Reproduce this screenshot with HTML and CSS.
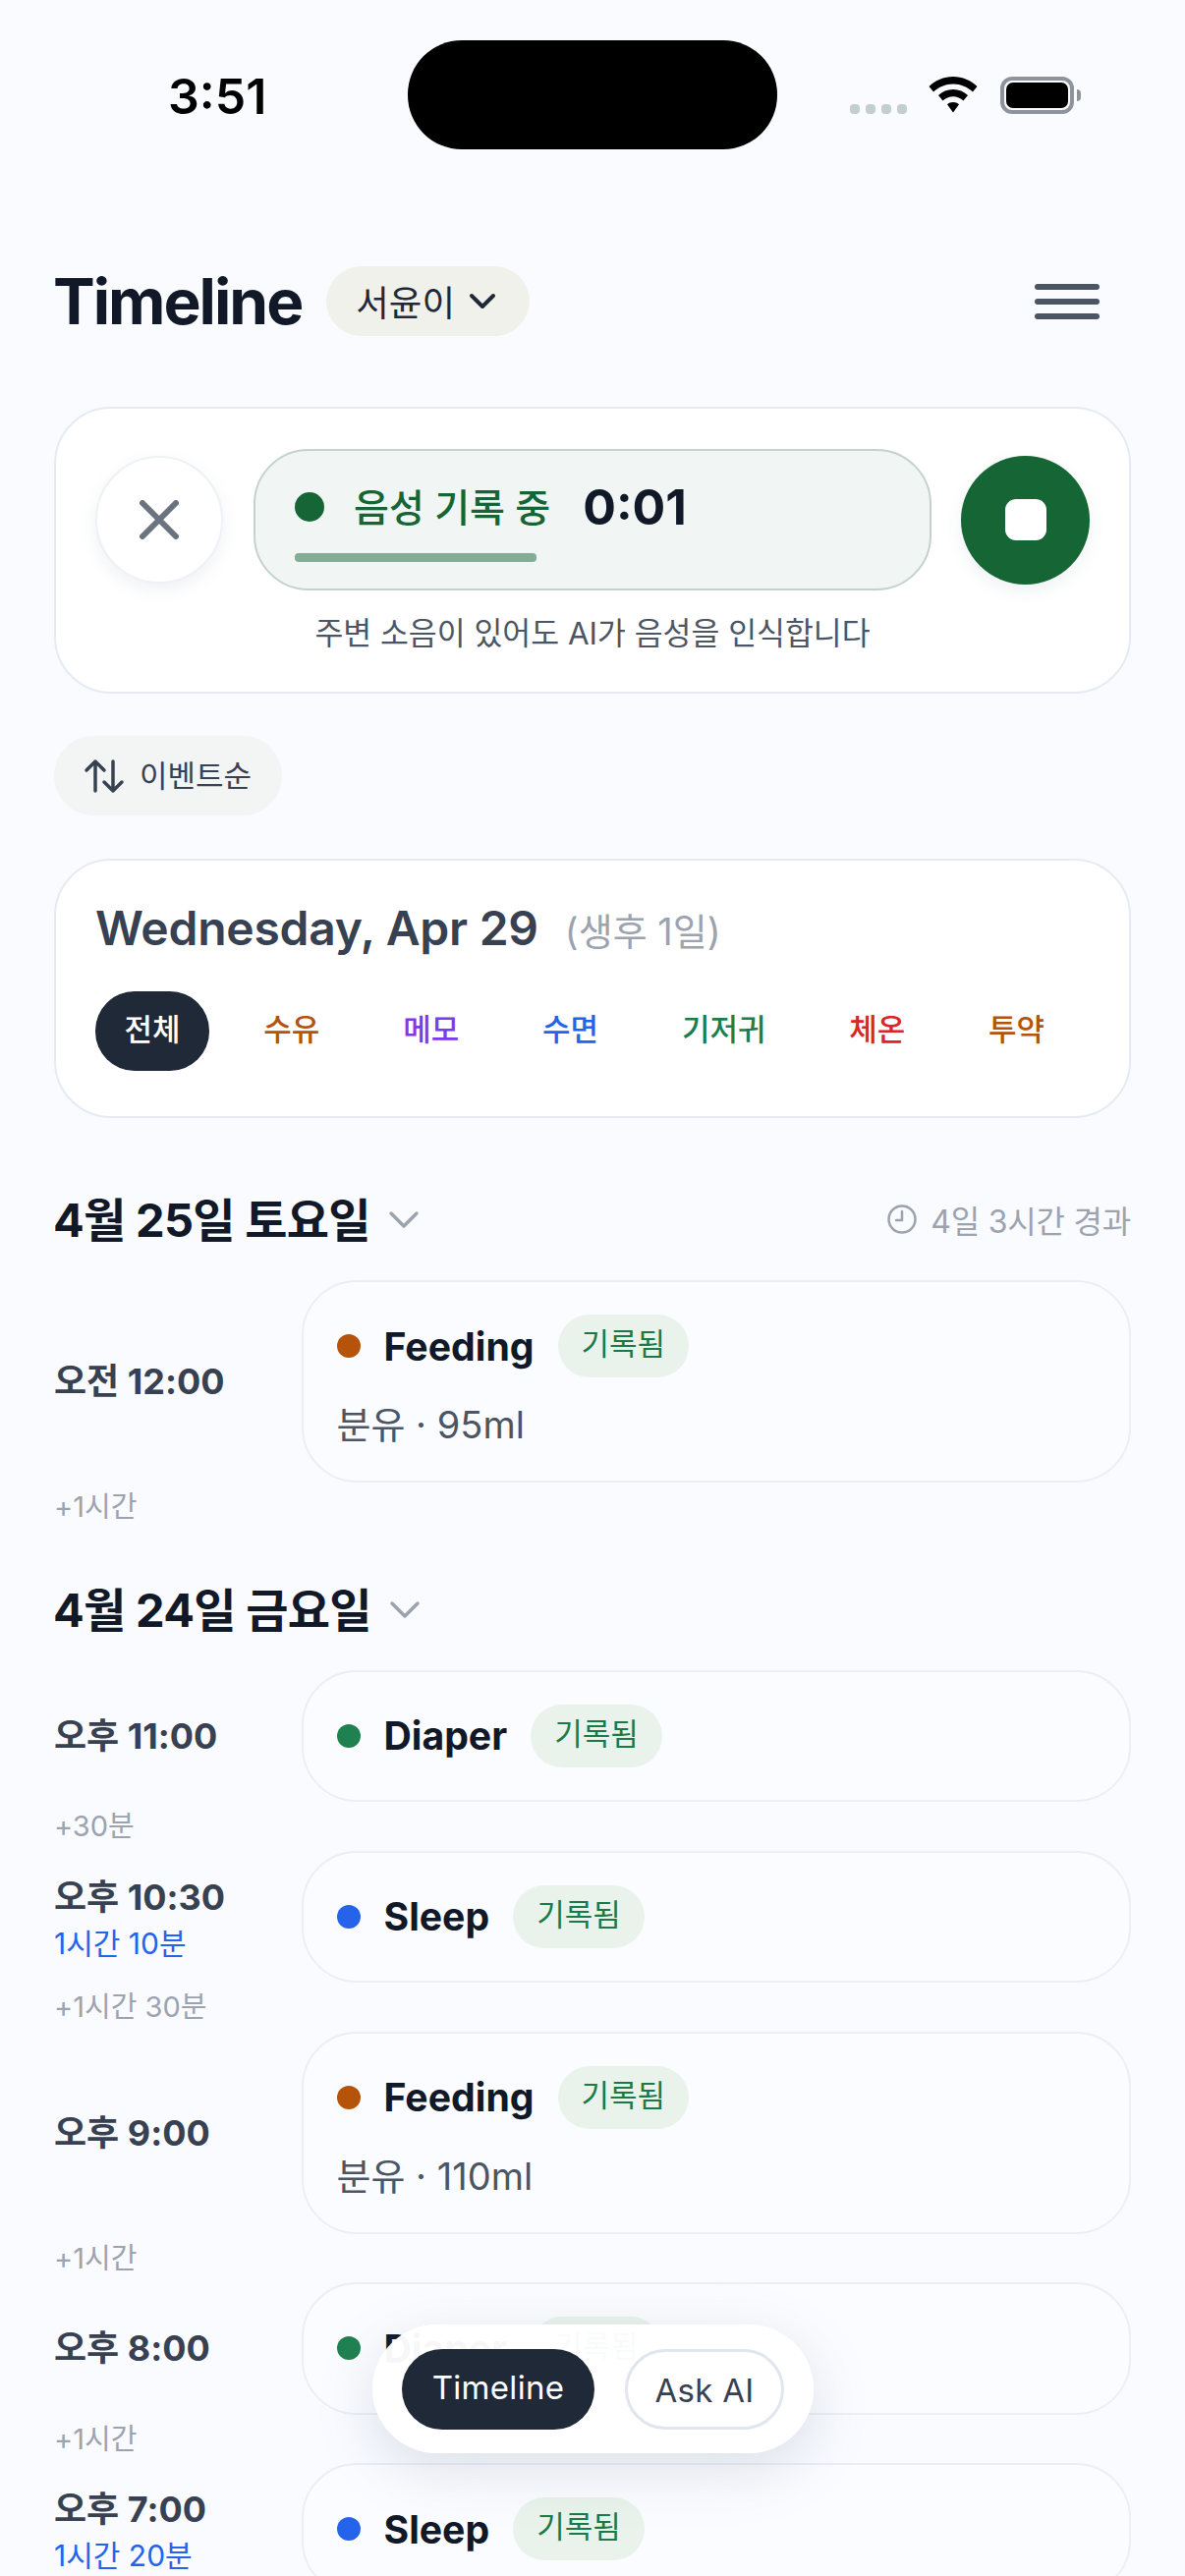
FILE: index.html
```html
<!DOCTYPE html>
<html lang="ko">
<head>
<meta charset="utf-8">
<title>Timeline</title>
<link rel="stylesheet" href="styles.css">
</head>
<body>
<div class="screen">
  <div class="status">
    <span class="clock">3:51</span>
    <span class="island"></span>
    <div class="status-icons">
      <span class="signal"><i></i><i></i><i></i><i></i></span>
      <svg class="wifi" width="50" height="38" viewBox="0 0 50 38"><path d="M25 0C15.500 0 7 3.700 0.500 10L5 15.500C10.300 10.500 17.300 7.400 25 7.400S39.700 10.500 45 15.500L49.500 10C43 3.700 34.500 0 25 0ZM25 13C19.200 13 14 15.200 10 19L14.500 24.500C17.300 21.900 21 20.300 25 20.300S32.700 21.900 35.500 24.500L40 19C36 15.200 30.800 13 25 13ZM25 26C22.400 26 20.800 26.800 19 28.300L25 36.500L31 28.300C29.200 26.800 27.600 26 25 26Z" fill="#000"/></svg>
      <span class="battery"><span class="battery-fill"></span></span><span class="battery-tip"></span>
    </div>
  </div>

  <header class="top">
    <h1 class="title">Timeline</h1>
    <button class="baby">서윤이
      <svg width="28" height="18" viewBox="0 0 28 18"><path d="M3 3L14 14L25 3" fill="none" stroke="#1f2937" stroke-width="4" stroke-linecap="round" stroke-linejoin="round"/></svg>
    </button>
    <span class="menu"><i></i><i></i><i></i></span>
  </header>

  <section class="card rec">
    <div class="rec-row">
      <button class="cancel">
        <svg width="40" height="40" viewBox="0 0 40 40"><path d="M3 3L37 37M37 3L3 37" stroke="#6b7280" stroke-width="6" stroke-linecap="round"/></svg>
      </button>
      <div class="rec-pill">
        <div class="rec-line"><span class="dot dot-rec"></span><span class="rec-label">음성 기록 중</span><span class="rec-time">0:01</span></div>
        <div class="rec-bar"></div>
      </div>
      <button class="stop"><span class="stop-mark"></span></button>
    </div>
    <p class="rec-hint">주변 소음이 있어도 AI가 음성을 인식합니다</p>
  </section>

  <button class="sort">
    <svg width="42" height="36" viewBox="0 0 42 36"><path d="M12 33V3M3 12L12 3L21 12M30 3V33M21 24L30 33L39 24" fill="none" stroke="#374151" stroke-width="3.500" stroke-linecap="round" stroke-linejoin="round"/></svg>
    <span class="sort-label">이벤트순</span>
  </button>

  <section class="card date-card">
    <div class="date-line"><span class="date">Wednesday, Apr 29</span><span class="age">(생후 1일)</span></div>
    <div class="chips">
      <span class="chip chip-on">전체</span>
      <span class="chip c-orange">수유</span>
      <span class="chip c-purple">메모</span>
      <span class="chip c-blue">수면</span>
      <span class="chip c-green">기저귀</span>
      <span class="chip c-red">체온</span>
      <span class="chip c-orange">투약</span>
      <span class="chip c-orange">이유식</span>
    </div>
  </section>

  <div class="day-head day-first">
    <h2 class="day">4월 25일 토요일</h2>
    <svg class="day-chev" width="32" height="20" viewBox="0 0 32 20"><path d="M3 3L16 16L29 3" fill="none" stroke="#9ca3af" stroke-width="3.500" stroke-linecap="round" stroke-linejoin="round"/></svg>
    <span class="elapsed">
      <svg width="32" height="32" viewBox="0 0 32 32"><circle cx="16" cy="16" r="13.500" fill="none" stroke="#9ca3af" stroke-width="2.500"/><path d="M16 8V17H10" fill="none" stroke="#9ca3af" stroke-width="2.500" stroke-linecap="round" stroke-linejoin="round"/></svg>
      4일 3시간 경과
    </span>
  </div>

  <div class="row">
    <div class="when"><span class="time">오전 12:00</span></div>
    <div class="event tall">
      <div class="ev-line"><span class="dot dot-orange"></span><span class="ev-name">Feeding</span><span class="badge">기록됨</span></div>
      <p class="ev-sub">분유 · 95ml</p>
    </div>
  </div>
  <p class="gap">+1시간</p>

  <div class="day-head day-second">
    <h2 class="day">4월 24일 금요일</h2>
    <svg class="day-chev" width="32" height="20" viewBox="0 0 32 20"><path d="M3 3L16 16L29 3" fill="none" stroke="#9ca3af" stroke-width="3.500" stroke-linecap="round" stroke-linejoin="round"/></svg>
  </div>

  <div class="row">
    <div class="when"><span class="time">오후 11:00</span></div>
    <div class="event"><div class="ev-line"><span class="dot dot-green"></span><span class="ev-name">Diaper</span><span class="badge">기록됨</span></div></div>
  </div>
  <p class="gap">+30분</p>
  <div class="row">
    <div class="when"><span class="time">오후 10:30</span><span class="span">1시간 10분</span></div>
    <div class="event"><div class="ev-line"><span class="dot dot-blue"></span><span class="ev-name">Sleep</span><span class="badge">기록됨</span></div></div>
  </div>
  <p class="gap">+1시간 30분</p>
  <div class="row">
    <div class="when"><span class="time">오후 9:00</span></div>
    <div class="event tall">
      <div class="ev-line"><span class="dot dot-orange"></span><span class="ev-name">Feeding</span><span class="badge">기록됨</span></div>
      <p class="ev-sub">분유 · 110ml</p>
    </div>
  </div>
  <p class="gap">+1시간</p>
  <div class="row">
    <div class="when"><span class="time">오후 8:00</span></div>
    <div class="event"><div class="ev-line"><span class="dot dot-green"></span><span class="ev-name">Diaper</span><span class="badge">기록됨</span></div></div>
  </div>
  <p class="gap">+1시간</p>
  <div class="row">
    <div class="when"><span class="time">오후 7:00</span><span class="span">1시간 20분</span></div>
    <div class="event"><div class="ev-line"><span class="dot dot-blue"></span><span class="ev-name">Sleep</span><span class="badge">기록됨</span></div></div>
  </div>

  <nav class="tabs">
    <span class="tab tab-on">Timeline</span>
    <span class="tab tab-off">Ask AI</span>
  </nav>
</div>
</body>
</html>
```
FILE: styles.css
```css
* { box-sizing: border-box; }
html, body { margin: 0; padding: 0; }
body { background: #f9fbff; font-family: Inter, "Noto Sans CJK KR", sans-serif; color: #111827; }
button { font: inherit; border: 0; padding: 0; }
h1, h2, p { margin: 0; font-weight: inherit; font-size: inherit; }
i { display: block; }

.screen { position: relative; width: 1206px; height: 2622px; overflow: hidden; padding: 41px 55px 0; }

.status { display: flex; align-items: flex-start; height: 111px; }
.clock { width: 360px; padding: 29px 0 0 116px; font-size: 50px; line-height: 56px; font-weight: 600; color: #000; }
.island { width: 376px; height: 111px; border-radius: 55px; background: #000; }
.status-icons { display: flex; align-items: center; height: 38px; margin: 37px 0 0 74px; }
.signal { display: flex; gap: 6px; align-self: flex-end; margin-right: 22px; }
.signal i { width: 10px; height: 10px; border-radius: 4px; background: #c3cfcb; }
.wifi { margin-right: 23px; }
.battery { width: 75px; height: 38px; border: 4px solid #8e939b; border-radius: 12px; padding: 2px; }
.battery-fill { display: block; height: 100%; border-radius: 7px; background: #000; }
.battery-tip { width: 4px; height: 12px; margin-left: 3px; border-radius: 0 4px 4px 0; background: #8e939b; }

.top { display: flex; align-items: center; height: 71px; margin-top: 119px; }
.title { margin-left: -1px; font-size: 64px; line-height: 71px; font-weight: 700; letter-spacing: -2px; color: #111827; }
.baby { display: flex; align-items: center; gap: 14px; height: 71px; margin-left: 25px; padding: 0 34px 0 30px; border-radius: 36px; background: #f1f1ec; font-size: 36.500px; color: #1f2937; }
.menu { display: flex; flex-direction: column; gap: 9px; width: 66px; margin-left: auto; margin-right: 32px; }
.menu i { height: 6px; border-radius: 3px; background: #4b5563; }

.card { background: #fff; border: 2px solid #e6eaf2; border-radius: 58px; }

.rec { height: 292px; margin-top: 72px; padding: 41px 40px 0; }
.rec-row { display: flex; align-items: center; }
.cancel { display: flex; align-items: center; justify-content: center; width: 130px; height: 130px; border-radius: 50%; background: #fff; border: 2px solid #eef1f6; box-shadow: 0 6px 16px rgba(100,116,139,.1); }
.rec-pill { width: 690px; height: 144px; margin-left: 31px; padding: 29px 40px 0; border-radius: 56px; background: #f1f5f3; border: 2px solid #c3d3cb; }
.rec-line { display: flex; align-items: center; height: 56px; }
.dot { flex: none; width: 24px; height: 24px; border-radius: 50%; }
.dot-rec { width: 30px; height: 30px; background: #166534; }
.rec-label { margin: 0 0 4px 30px; font-size: 39px; font-weight: 500; color: #166534; }
.rec-time { margin-left: 33px; font-size: 50px; font-weight: 700; color: #111827; }
.rec-bar { width: 246px; height: 9px; margin-top: 19px; border-radius: 4px; background: #82ae95; }
.stop { display: flex; align-items: center; justify-content: center; width: 131px; height: 131px; margin-left: 30px; border-radius: 50%; background: #166534; box-shadow: 0 6px 16px rgba(100,116,139,.1); }
.stop-mark { width: 42px; height: 42px; border-radius: 11px; background: #fff; }
.rec-hint { margin-top: 22px; text-align: center; font-size: 31.400px; line-height: 44px; color: #4b5563; }

.sort { display: flex; align-items: center; gap: 15px; width: 232px; height: 81px; margin-top: 43px; padding-left: 30px; border-radius: 40px; background: #f3f5f4; font-size: 31px; color: #374151; }
.sort-label { margin-bottom: 4px; }

.date-card { height: 264px; margin-top: 44px; padding: 38px 0 0 40px; overflow: hidden; }
.date-line { display: flex; align-items: baseline; gap: 27px; height: 62px; }
.date { font-size: 48px; line-height: 62px; font-weight: 600; color: #374151; letter-spacing: -.25px; }
.age { font-size: 38px; color: #9ca3af; }
.chips { display: flex; gap: 25.800px; margin-top: 33px; white-space: nowrap; }
.chip { flex: none; height: 81px; padding: 0 29.500px; line-height: 78px; border-radius: 40px; font-size: 31px; font-weight: 500; }
.chip-on { background: #1f2937; color: #fff; }
.c-orange { color: #b45309; }
.c-purple { color: #7c3aed; }
.c-blue { color: #2563eb; }
.c-green { color: #1a7f4f; }
.c-red { color: #dc2626; }

.day-head { display: flex; align-items: center; height: 56px; }
.day-first { margin-top: 76px; }
.day-second { height: 55px; margin-top: 53px; }
.day { margin-left: -1px; font-size: 47px; line-height: 56px; font-weight: 700; letter-spacing: -.7px; color: #111827; }
.day-chev { margin: 0 0 0 18px; }
.elapsed { display: flex; align-items: center; gap: 13px; margin: 0 0 2px auto; font-size: 32px; letter-spacing: -.2px; color: #9ca3af; }

.row { display: flex; align-items: center; }
.day-head + .row { margin-top: 33px; }
.when { display: flex; flex-direction: column; width: 251.500px; }
.time { font-size: 36px; line-height: 48px; font-weight: 700; color: #374151; }
.span { margin-top: 6px; font-size: 30px; line-height: 34px; color: #2563eb; }
.event { flex: 1; min-height: 134.500px; padding: 0 34px; display: flex; flex-direction: column; justify-content: center; border: 2px solid #ebeef5; border-radius: 56px; background: #fbfcff; }
.event.tall { min-height: 206px; padding-top: 33px; justify-content: flex-start; }
.ev-line { display: flex; align-items: center; height: 64px; }
.ev-name { margin-left: 24px; font-size: 39.200px; font-weight: 700; color: #111827; }
.badge { margin-left: 24px; height: 64px; padding: 0 24px; line-height: 60px; border-radius: 32px; background: #e9f3ec; font-size: 31px; color: #1a7a47; }
.ev-sub { margin-top: 23px; font-size: 38px; line-height: 50px; color: #4b5563; }
.dot-orange { background: #b45309; }
.dot-green { background: #1f8050; }
.dot-blue { background: #2563eb; }
.gap { height: 49.500px; padding-top: 6px; font-size: 29px; line-height: 38px; color: #9ca3af; }

.tabs { position: absolute; left: 379px; top: 2366px; display: flex; gap: 31px; align-items: center; width: 449px; height: 131px; padding: 0 30px; border-radius: 66px; background: rgba(255,255,255,.97); box-shadow: 0 16px 60px rgba(100,116,139,.2); }
.tab { height: 82px; line-height: 78px; border-radius: 41px; font-size: 33px; letter-spacing: .3px; text-align: center; font-weight: 400; }
.tab-on { width: 196px; background: #1f2937; color: #fff; }
.tab-off { width: 162px; background: #fff; border: 3px solid #e0e5ee; color: #374151; }
```
